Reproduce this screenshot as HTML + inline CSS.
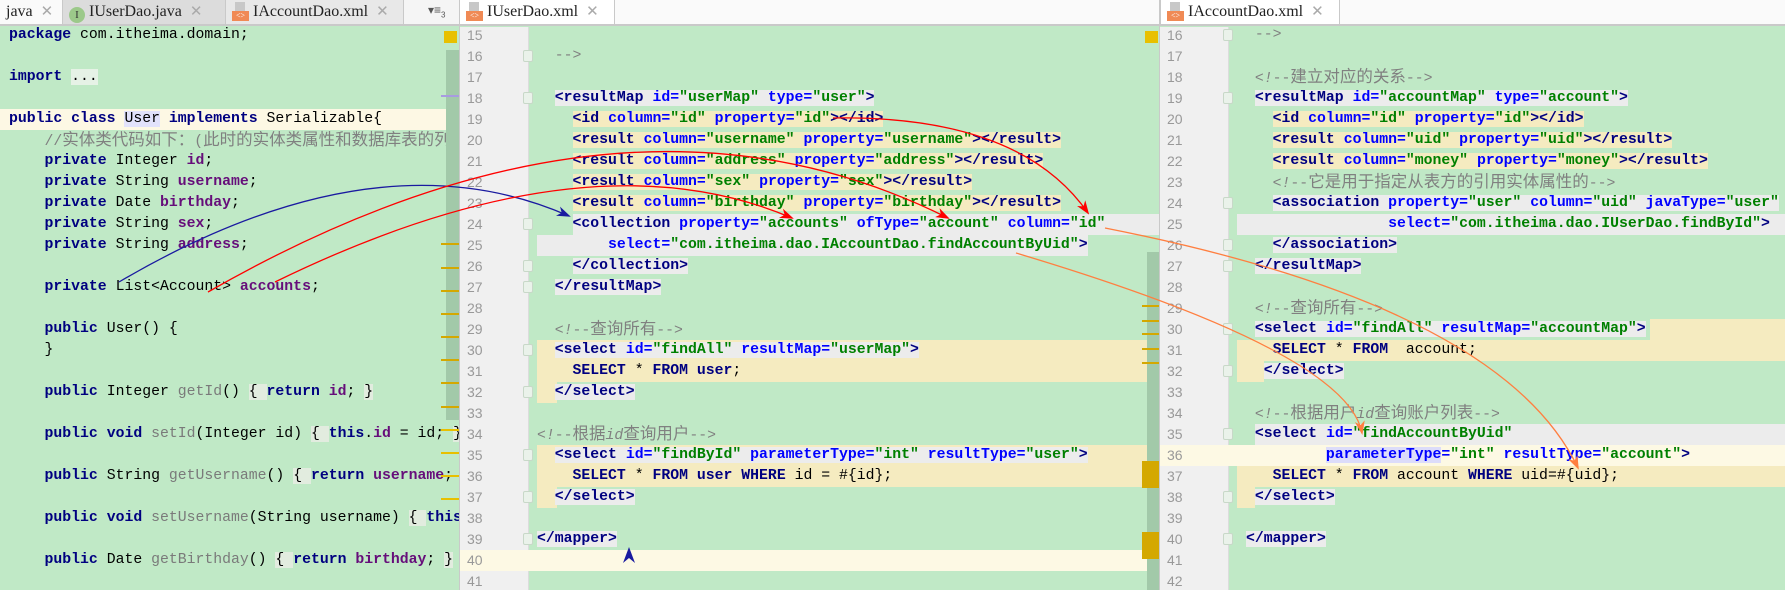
<!DOCTYPE html>
<html><head><meta charset="utf-8">
<style>
*{margin:0;padding:0;box-sizing:border-box}
body{width:1785px;height:590px;overflow:hidden;background:#c0e9c6;position:relative;font-family:"Liberation Mono","Noto Sans CJK SC",monospace;font-size:14.8px}
.pane{position:absolute;top:0;height:590px;overflow:hidden;background:#c0e9c6}
.tabbar{position:absolute;left:0;right:0;top:0;height:26px;background:#f5f5f5;border-bottom:2px solid #c9c9c9;font-family:"Liberation Serif","Noto Serif CJK SC",serif;font-size:16px;color:#222}
.tab{position:absolute;top:0;height:24px;line-height:24px;padding-left:6px;border-right:1px solid #c9c9c9;white-space:nowrap}
.x{color:#aaa;font-family:"Liberation Sans",sans-serif;font-size:15px;margin-left:8px}
.ico{display:inline-block;width:17px;height:10px;background:#f08a55;color:#fff;font-size:8px;line-height:10px;text-align:center;vertical-align:-2px;margin-right:4px;position:relative}
.ico:before{content:"";position:absolute;left:3px;top:-9px;width:10px;height:9px;background:#c8c8c8}
.gut{position:absolute;top:27px;bottom:0;left:0;width:69px;background:#f0f0f0;border-right:1px solid #dcdcdc}
.num{position:absolute;left:7px;height:21px;line-height:21px;color:#999;font-size:14px;font-family:"Liberation Sans",sans-serif}
.code{position:absolute;top:0;right:0;bottom:0}
.l{position:absolute;left:0;height:21px;line-height:21px;white-space:pre}
.rb{position:absolute;height:21px}
.t{color:#000080;font-weight:bold}
.a{color:#0000ff;font-weight:bold}
.v{color:#008000;font-weight:bold}
.c{color:#808080}
.k{color:#000080;font-weight:bold}
.f{color:#660e7a;font-weight:bold}
.m{color:#7a7a7a}
.g{background:#ececec}
.y{background:#f5ebc0}
.w{background:#e2ecdf}
.z{font-size:16.5px}
.fold{position:absolute;width:10px;height:12px;border:1px solid #c8d8c8;background:#eaf2ea;border-radius:2px}
</style></head><body>

<!-- LEFT PANE -->
<div class="pane" style="left:0;width:459px">
 <div class="rb" style="top:109px;left:0;width:459px;background:#fdf8e4"></div>
 <div class="code" style="left:9px">
  <div class="l" style="top:25px"><span class="k">package</span> com.itheima.domain;</div>
  <div class="l" style="top:67px"><span class="k">import</span> <span class="w" style="background:#e6f2e6">...</span></div>
  <div class="l" style="top:109px"><span class="k">public class</span> <span style="background:#e2e2fb">User</span> <span class="k">implements</span> Serializable{</div>
  <div class="l c" style="top:130px">    //<span class="z">实体类代码如下：</span>(<span class="z">此时的实体类属性和数据库表的列名</span></div>
  <div class="l" style="top:151px">    <span class="k">private</span> Integer <span class="f">id</span>;</div>
  <div class="l" style="top:172px">    <span class="k">private</span> String <span class="f">username</span>;</div>
  <div class="l" style="top:193px">    <span class="k">private</span> Date <span class="f">birthday</span>;</div>
  <div class="l" style="top:214px">    <span class="k">private</span> String <span class="f">sex</span>;</div>
  <div class="l" style="top:235px">    <span class="k">private</span> String <span class="f">address</span>;</div>
  <div class="l" style="top:277px">    <span class="k">private</span> List&lt;Account&gt; <span class="f">accounts</span>;</div>
  <div class="l" style="top:319px">    <span class="k">public</span> User() {</div>
  <div class="l" style="top:340px">    }</div>
  <div class="l" style="top:382px">    <span class="k">public</span> Integer <span class="m">getId</span>() <span class="w">{ </span><span class="k">return</span> <span class="f">id</span>; <span class="w">}</span></div>
  <div class="l" style="top:424px">    <span class="k">public void</span> <span class="m">setId</span>(Integer id) <span class="w">{ </span><span class="k">this</span>.<span class="f">id</span> = id; <span class="w">}</span></div>
  <div class="l" style="top:466px">    <span class="k">public</span> String <span class="m">getUsername</span>() <span class="w">{ </span><span class="k">return</span> <span class="f">username</span>; <span class="w">}</span></div>
  <div class="l" style="top:508px">    <span class="k">public void</span> <span class="m">setUsername</span>(String username) <span class="w">{ </span><span class="k">this</span>.<span class="f">username</span> = username; }</div>
  <div class="l" style="top:550px">    <span class="k">public</span> Date <span class="m">getBirthday</span>() <span class="w">{ </span><span class="k">return</span> <span class="f">birthday</span>; <span class="w">}</span></div>
 </div>
 <div style="position:absolute;left:446px;top:50px;width:13px;height:370px;background:#a2c9a9"></div>
 <div style="position:absolute;left:444px;top:31px;width:13px;height:12px;background:#e8c000"></div>
 <div style="position:absolute;left:441px;top:95px;width:18px;height:2px;background:#a89be0"></div>
 <div style="position:absolute;left:441px;top:243px;width:18px;height:2px;background:#d4a800"></div>
 <div style="position:absolute;left:441px;top:267px;width:18px;height:2px;background:#d4a800"></div>
 <div style="position:absolute;left:441px;top:290px;width:18px;height:2px;background:#d4a800"></div>
 <div style="position:absolute;left:441px;top:313px;width:18px;height:2px;background:#d4a800"></div>
 <div style="position:absolute;left:441px;top:336px;width:18px;height:2px;background:#d4a800"></div>
 <div style="position:absolute;left:441px;top:359px;width:18px;height:2px;background:#d4a800"></div>
 <div style="position:absolute;left:441px;top:382px;width:18px;height:2px;background:#d4a800"></div>
 <div style="position:absolute;left:441px;top:406px;width:18px;height:2px;background:#d4a800"></div>
 <div style="position:absolute;left:441px;top:429px;width:18px;height:2px;background:#e8c000"></div>
 <div style="position:absolute;left:441px;top:452px;width:18px;height:2px;background:#e8c000"></div>
 <div style="position:absolute;left:441px;top:475px;width:18px;height:2px;background:#e8c000"></div>
 <div style="position:absolute;left:441px;top:498px;width:18px;height:2px;background:#e8c000"></div>
 <div class="tabbar">
  <div class="tab" style="left:0;width:63px;background:#fafafa">java<span class="x">✕</span></div>
  <div class="tab" style="left:63px;width:163px;background:#dcdcdc"><span style="display:inline-block;width:16px;height:16px;border-radius:50%;background:#9cc98a;color:#333;font-size:11px;line-height:16px;text-align:center;vertical-align:-2px;margin-right:4px">I</span>IUserDao.java<span class="x">✕</span></div>
  <div class="tab" style="left:226px;width:178px;background:#e8e8e8"><span class="ico">&lt;&gt;</span>IAccountDao.xml<span class="x">✕</span></div>
  <div style="position:absolute;left:428px;top:3px;font-size:12px;color:#555;font-family:'Liberation Sans',sans-serif">▾≡<sub style="font-size:8px">3</sub></div>
 </div>
</div>

<!-- MIDDLE PANE -->
<div class="pane" style="left:459px;width:700px;border-left:1px solid #c9c9c9">
 <div class="gut"></div>
 <div class="rb" style="top:550px;left:0;width:700px;background:#fdf9e4"></div>
 <div class="rb" style="top:340px;left:77px;right:0;background:#f5ebc0"></div>
 <div class="rb" style="top:361px;left:77px;right:0;background:#f5ebc0"></div>
 <div class="rb" style="top:382px;left:77px;width:20px;background:#f5ebc0"></div>
 <div class="rb" style="top:445px;left:77px;right:0;background:#f5ebc0"></div>
 <div class="rb" style="top:466px;left:77px;right:0;background:#f5ebc0"></div>
 <div class="rb" style="top:487px;left:77px;width:20px;background:#f5ebc0"></div>
 <div class="rb" style="top:214px;left:113px;right:0;background:#ececec"></div>
 <div class="num" style="top:25px">15</div><div class="num" style="top:46px">16</div><div class="num" style="top:67px">17</div><div class="num" style="top:88px">18</div><div class="num" style="top:109px">19</div><div class="num" style="top:130px">20</div><div class="num" style="top:151px">21</div><div class="num" style="top:172px">22</div><div class="num" style="top:193px">23</div><div class="num" style="top:214px">24</div><div class="num" style="top:235px">25</div><div class="num" style="top:256px">26</div><div class="num" style="top:277px">27</div><div class="num" style="top:298px">28</div><div class="num" style="top:319px">29</div><div class="num" style="top:340px">30</div><div class="num" style="top:361px">31</div><div class="num" style="top:382px">32</div><div class="num" style="top:403px">33</div><div class="num" style="top:424px">34</div><div class="num" style="top:445px">35</div><div class="num" style="top:466px">36</div><div class="num" style="top:487px">37</div><div class="num" style="top:508px">38</div><div class="num" style="top:529px">39</div><div class="num" style="top:550px">40</div><div class="num" style="top:571px">41</div>
 <div class="fold" style="left:63px;top:50px"></div><div class="fold" style="left:63px;top:92px"></div><div class="fold" style="left:63px;top:218px"></div><div class="fold" style="left:63px;top:260px"></div><div class="fold" style="left:63px;top:281px"></div><div class="fold" style="left:63px;top:344px"></div><div class="fold" style="left:63px;top:386px"></div><div class="fold" style="left:63px;top:449px"></div><div class="fold" style="left:63px;top:491px"></div><div class="fold" style="left:63px;top:533px"></div>
 <div class="code" style="left:77px">
  <div class="l c" style="top:46px">  --&gt;</div>
  <div class="l" style="top:88px">  <span class="g"><span class="t">&lt;resultMap</span> <span class="a">id=</span><span class="v">"userMap"</span> <span class="a">type=</span><span class="v">"user"</span><span class="t">&gt;</span></span></div>
  <div class="l" style="top:109px">    <span class="y"><span class="t">&lt;id</span> <span class="a">column=</span><span class="v">"id"</span> <span class="a">property=</span><span class="v">"id"</span><span class="t">&gt;&lt;/id&gt;</span></span></div>
  <div class="l" style="top:130px">    <span class="y"><span class="t">&lt;result</span> <span class="a">column=</span><span class="v">"username"</span> <span class="a">property=</span><span class="v">"username"</span><span class="t">&gt;&lt;/result&gt;</span></span></div>
  <div class="l" style="top:151px">    <span class="y"><span class="t">&lt;result</span> <span class="a">column=</span><span class="v">"address"</span> <span class="a">property=</span><span class="v">"address"</span><span class="t">&gt;&lt;/result&gt;</span></span></div>
  <div class="l" style="top:172px">    <span class="y"><span class="t">&lt;result</span> <span class="a">column=</span><span class="v">"sex"</span> <span class="a">property=</span><span class="v">"sex"</span><span class="t">&gt;&lt;/result&gt;</span></span></div>
  <div class="l" style="top:193px">    <span class="y"><span class="t">&lt;result</span> <span class="a">column=</span><span class="v">"birthday"</span> <span class="a">property=</span><span class="v">"birthday"</span><span class="t">&gt;&lt;/result&gt;</span></span></div>
  <div class="l" style="top:214px">    <span class="t">&lt;collection</span> <span class="a">property=</span><span class="v">"accounts"</span> <span class="a">ofType=</span><span class="v">"account"</span> <span class="a">column=</span><span class="v">"id"</span></div>
  <div class="l g" style="top:235px">        <span class="a">select=</span><span class="v">"com.itheima.dao.IAccountDao.findAccountByUid"</span><span class="t">&gt;</span></div>
  <div class="l" style="top:256px">    <span class="g t">&lt;/collection&gt;</span></div>
  <div class="l" style="top:277px">  <span class="g t">&lt;/resultMap&gt;</span></div>
  <div class="l c" style="top:319px">  &lt;<i>!</i>--<span class="z">查询所有</span>--&gt;</div>
  <div class="l" style="top:340px">  <span class="g"><span class="t">&lt;select</span> <span class="a">id=</span><span class="v">"findAll"</span> <span class="a">resultMap=</span><span class="v">"userMap"</span><span class="t">&gt;</span></span></div>
  <div class="l" style="top:361px">    <span class="k">SELECT</span> * <span class="k">FROM</span> <span class="k">user</span>;</div>
  <div class="l" style="top:382px">  <span class="g t">&lt;/select&gt;</span></div>
  <div class="l c" style="top:424px">&lt;<i>!</i>--<span class="z">根据</span><i>id</i><span class="z">查询用户</span>--&gt;</div>
  <div class="l" style="top:445px">  <span class="g"><span class="t">&lt;select</span> <span class="a">id=</span><span class="v">"findById"</span> <span class="a">parameterType=</span><span class="v">"int"</span> <span class="a">resultType=</span><span class="v">"user"</span><span class="t">&gt;</span></span></div>
  <div class="l" style="top:466px">    <span class="k">SELECT</span> * <span class="k">FROM</span> <span class="k">user</span> <span class="k">WHERE</span> id = #{id};</div>
  <div class="l" style="top:487px">  <span class="g t">&lt;/select&gt;</span></div>
  <div class="l" style="top:529px"><span class="g t">&lt;/mapper&gt;</span></div>
 </div>
 <div style="position:absolute;left:687px;top:252px;width:12px;height:338px;background:#a2c9a9"></div>
 <div style="position:absolute;left:685px;top:31px;width:13px;height:12px;background:#e8c000"></div>
 <div style="position:absolute;left:682px;top:305px;width:18px;height:2px;background:#d4a800"></div>
 <div style="position:absolute;left:682px;top:320px;width:18px;height:2px;background:#d4a800"></div>
 <div style="position:absolute;left:682px;top:333px;width:18px;height:2px;background:#d4a800"></div>
 <div style="position:absolute;left:682px;top:348px;width:18px;height:2px;background:#d4a800"></div>
 <div style="position:absolute;left:682px;top:362px;width:18px;height:2px;background:#d4a800"></div>
 <div style="position:absolute;left:682px;top:461px;width:18px;height:27px;background:#d4a800"></div>
 <div style="position:absolute;left:682px;top:532px;width:18px;height:27px;background:#d4a800"></div>
 <div class="tabbar" style="background:#fafafa">
  <div class="tab" style="left:0;width:155px;background:#fff"><span class="ico">&lt;&gt;</span>IUserDao.xml<span class="x">✕</span></div>
 </div>
</div>

<!-- RIGHT PANE -->
<div class="pane" style="left:1159px;width:626px;border-left:1px solid #c9c9c9;border-bottom-right-radius:8px">
 <div class="gut"></div>
 <div class="rb" style="top:445px;left:0;width:626px;background:#fdf9e4"></div>
 <div class="rb" style="top:340px;left:77px;right:0;background:#f5ebc0"></div>
 <div class="rb" style="top:319px;left:490px;right:0;background:#f5ebc0"></div>
 <div class="rb" style="top:361px;left:77px;width:27px;background:#f5ebc0"></div>
 <div class="rb" style="top:466px;left:77px;right:0;background:#f5ebc0"></div>
 <div class="rb" style="top:487px;left:77px;width:18px;background:#f5ebc0"></div>
 <div class="rb" style="top:424px;left:95px;right:0;background:#ececec"></div>
 <div class="rb" style="top:214px;left:77px;right:0;background:#ececec"></div>
 <div class="num" style="top:25px">16</div><div class="num" style="top:46px">17</div><div class="num" style="top:67px">18</div><div class="num" style="top:88px">19</div><div class="num" style="top:109px">20</div><div class="num" style="top:130px">21</div><div class="num" style="top:151px">22</div><div class="num" style="top:172px">23</div><div class="num" style="top:193px">24</div><div class="num" style="top:214px">25</div><div class="num" style="top:235px">26</div><div class="num" style="top:256px">27</div><div class="num" style="top:277px">28</div><div class="num" style="top:298px">29</div><div class="num" style="top:319px">30</div><div class="num" style="top:340px">31</div><div class="num" style="top:361px">32</div><div class="num" style="top:382px">33</div><div class="num" style="top:403px">34</div><div class="num" style="top:424px">35</div><div class="num" style="top:445px">36</div><div class="num" style="top:466px">37</div><div class="num" style="top:487px">38</div><div class="num" style="top:508px">39</div><div class="num" style="top:529px">40</div><div class="num" style="top:550px">41</div><div class="num" style="top:571px">42</div>
 <div class="fold" style="left:63px;top:29px"></div><div class="fold" style="left:63px;top:92px"></div><div class="fold" style="left:63px;top:197px"></div><div class="fold" style="left:63px;top:239px"></div><div class="fold" style="left:63px;top:260px"></div><div class="fold" style="left:63px;top:323px"></div><div class="fold" style="left:63px;top:365px"></div><div class="fold" style="left:63px;top:428px"></div><div class="fold" style="left:63px;top:491px"></div><div class="fold" style="left:63px;top:533px"></div>
 <div class="code" style="left:86px">
  <div class="l c" style="top:25px"> --&gt;</div>
  <div class="l c" style="top:67px"> &lt;<i>!</i>--<span class="z">建立对应的关系</span>--&gt;</div>
  <div class="l" style="top:88px"> <span class="g"><span class="t">&lt;resultMap</span> <span class="a">id=</span><span class="v">"accountMap"</span> <span class="a">type=</span><span class="v">"account"</span><span class="t">&gt;</span></span></div>
  <div class="l" style="top:109px">   <span class="y"><span class="t">&lt;id</span> <span class="a">column=</span><span class="v">"id"</span> <span class="a">property=</span><span class="v">"id"</span><span class="t">&gt;&lt;/id&gt;</span></span></div>
  <div class="l" style="top:130px">   <span class="y"><span class="t">&lt;result</span> <span class="a">column=</span><span class="v">"uid"</span> <span class="a">property=</span><span class="v">"uid"</span><span class="t">&gt;&lt;/result&gt;</span></span></div>
  <div class="l" style="top:151px">   <span class="y"><span class="t">&lt;result</span> <span class="a">column=</span><span class="v">"money"</span> <span class="a">property=</span><span class="v">"money"</span><span class="t">&gt;&lt;/result&gt;</span></span></div>
  <div class="l c" style="top:172px">   &lt;<i>!</i>--<span class="z">它是用于指定从表方的引用实体属性的</span>--&gt;</div>
  <div class="l" style="top:193px">   <span class="g"><span class="t">&lt;association</span> <span class="a">property=</span><span class="v">"user"</span> <span class="a">column=</span><span class="v">"uid"</span> <span class="a">javaType=</span><span class="v">"user"</span></span></div>
  <div class="l" style="top:214px">                <span class="a">select=</span><span class="v">"com.itheima.dao.IUserDao.findById"</span><span class="t">&gt;</span></div>
  <div class="l" style="top:235px">   <span class="g t">&lt;/association&gt;</span></div>
  <div class="l" style="top:256px"> <span class="g t">&lt;/resultMap&gt;</span></div>
  <div class="l c" style="top:298px"> &lt;<i>!</i>--<span class="z">查询所有</span>--&gt;</div>
  <div class="l" style="top:319px"> <span class="g"><span class="t">&lt;select</span> <span class="a">id=</span><span class="v">"findAll"</span> <span class="a">resultMap=</span><span class="v">"accountMap"</span><span class="t">&gt;</span></span></div>
  <div class="l" style="top:340px">   <span class="k">SELECT</span> * <span class="k">FROM</span>  account;</div>
  <div class="l" style="top:361px">  <span class="g t">&lt;/select&gt;</span></div>
  <div class="l c" style="top:403px"> &lt;<i>!</i>--<span class="z">根据用户</span><i>id</i><span class="z">查询账户列表</span>--&gt;</div>
  <div class="l" style="top:424px"> <span class="g"><span class="t">&lt;select</span> <span class="a">id=</span><span class="v">"findAccountByUid"</span></span></div>
  <div class="l" style="top:445px">         <span class="a" style="background:#dcdcfa">parameterType</span><span class="a">=</span><span class="v">"int"</span> <span class="a">resultType=</span><span class="v">"account"</span><span class="t">&gt;</span></div>
  <div class="l" style="top:466px">   <span class="k">SELECT</span> * <span class="k">FROM</span> account <span class="k">WHERE</span> uid=#{uid};</div>
  <div class="l" style="top:487px"> <span class="g t">&lt;/select&gt;</span></div>
  <div class="l" style="top:529px"><span class="g t">&lt;/mapper&gt;</span></div>
 </div>
 <div class="tabbar" style="background:#fafafa">
  <div class="tab" style="left:0;width:180px;background:#fff;border-left:1px solid #c9c9c9"><span class="ico">&lt;&gt;</span>IAccountDao.xml<span class="x">✕</span></div>
 </div>
</div>

<!-- ARROWS -->
<svg width="1785" height="590" style="position:absolute;left:0;top:0" xmlns="http://www.w3.org/2000/svg">
 <defs>
  <marker id="mr" markerWidth="14" markerHeight="10" refX="12" refY="5" orient="auto" markerUnits="userSpaceOnUse"><path d="M0,0 L14,5 L0,10 L4,5 Z" fill="#ff0000"/></marker>
  <marker id="mb" markerWidth="14" markerHeight="10" refX="12" refY="5" orient="auto" markerUnits="userSpaceOnUse"><path d="M0,0 L14,5 L0,10 L4,5 Z" fill="#1a1aa0"/></marker>
  <marker id="mo" markerWidth="14" markerHeight="10" refX="12" refY="5" orient="auto" markerUnits="userSpaceOnUse"><path d="M0,0 L14,5 L0,10 L4,5 Z" fill="#ff7f40"/></marker>
 </defs>
 <path d="M119,282 Q376,131 569,216" fill="none" stroke="#1a1aa0" stroke-width="1.3" marker-end="url(#mb)"/>
 <path d="M208,292 Q622,55 948,218" fill="none" stroke="#ff0000" stroke-width="1.3" marker-end="url(#mr)"/>
 <path d="M275,282 Q586,130 792,218" fill="none" stroke="#ff0000" stroke-width="1.3" marker-end="url(#mr)"/>
 <path d="M833,118 Q1020,115 1088,213" fill="none" stroke="#ff0000" stroke-width="1.3" marker-end="url(#mr)"/>
 <path d="M1105,228 Q1501,306 1578,468" fill="none" stroke="#ff7f40" stroke-width="1.3" marker-end="url(#mo)"/>
 <path d="M1016,253 Q1347,352 1362,433" fill="none" stroke="#ff7f40" stroke-width="1.3" marker-end="url(#mo)"/>
 <path d="M629,547 L623,563 L629,558 L635,563 Z" fill="#1a1aa0"/>
</svg>
</body></html>
